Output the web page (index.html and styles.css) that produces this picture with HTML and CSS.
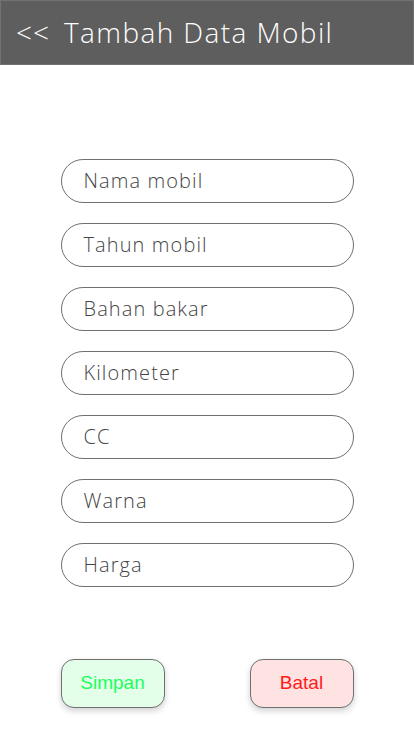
FILE: index.html
```html
<!DOCTYPE html>
<html>
<head>
<meta charset="utf-8">
<link rel="stylesheet" href="styles.css">
</head>
<body>
<header class="topbar">
  <span class="back">&lt;&lt;</span>
  <span class="title">Tambah Data Mobil</span>
</header>
<main class="form">
  <div class="field">Nama mobil</div>
  <div class="field">Tahun mobil</div>
  <div class="field">Bahan bakar</div>
  <div class="field">Kilometer</div>
  <div class="field">CC</div>
  <div class="field">Warna</div>
  <div class="field">Harga</div>
  <div class="actions">
    <button class="btn save">Simpan</button>
    <button class="btn cancel">Batal</button>
  </div>
</main>
</body>
</html>
```
FILE: styles.css
```css
html, body {
  margin: 0;
  padding: 0;
  background: #fff;
}
body {
  width: 414px;
  height: 736px;
  overflow: hidden;
  font-family: "Open Sans", "DejaVu Sans", sans-serif;
}
.topbar {
  box-sizing: border-box;
  height: 65px;
  background: #5e5e5e;
  border: 1px solid #727272;
  display: flex;
  align-items: center;
  padding: 0 0 2px 15px;
  color: #fff;
  font-weight: 300;
  font-size: 28px;
}
.back {
  width: 48px;
  letter-spacing: 1px;
}
.title {
  letter-spacing: 1.4px;
}
.field {
  letter-spacing: 1.1px;
}
.form {
  display: flex;
  flex-direction: column;
  align-items: center;
  padding-top: 94px;
  gap: 20px;
}
.field {
  box-sizing: border-box;
  width: 293px;
  height: 44px;
  border: 1px solid #707070;
  border-radius: 22px;
  padding: 0 0 2px 22px;
  display: flex;
  align-items: center;
  font-size: 20px;
  font-weight: 300;
  color: #444;
}
.actions {
  width: 293px;
  display: flex;
  justify-content: space-between;
  margin-top: 52px;
}
.btn {
  box-sizing: border-box;
  width: 104px;
  height: 49px;
  border: 1px solid #707070;
  border-radius: 13px;
  box-shadow: 0 3px 6px rgba(0,0,0,0.18);
  font-family: "Liberation Sans", sans-serif;
  font-size: 19px;
  padding: 0 0 2px 0;
}
.save {
  background: #e3ffea;
  color: #1aff5a;
}
.cancel {
  background: #ffe3e3;
  color: #ff1a1a;
}
```
